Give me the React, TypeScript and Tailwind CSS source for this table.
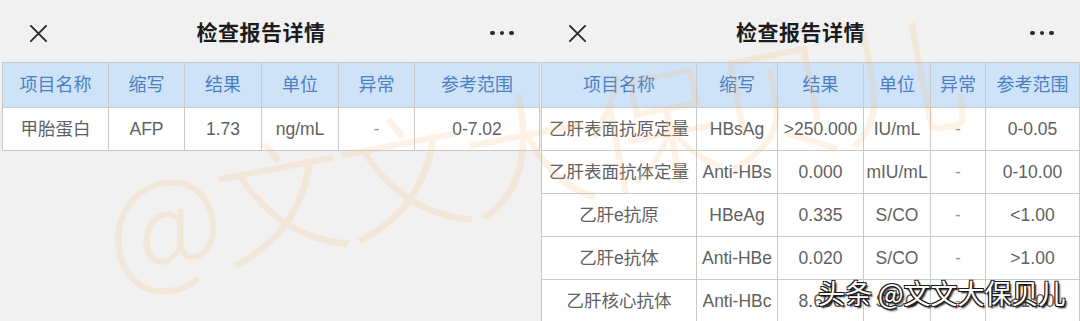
import React from "react";

const font = "font-['Liberation_Sans','Noto_Sans_CJK_SC',sans-serif]";

type Panel = {
  cols: string;
  headers: string[];
  rows: string[][];
};

const leftPanel: Panel = {
  cols: "grid-cols-[106px_76px_77px_77px_76px_1fr]",
  headers: ["项目名称", "缩写", "结果", "单位", "异常", "参考范围"],
  rows: [["甲胎蛋白", "AFP", "1.73", "ng/mL", "-", "0-7.02"]],
};

const rightPanel: Panel = {
  cols: "grid-cols-[155px_81px_86px_67px_55px_1fr]",
  headers: ["项目名称", "缩写", "结果", "单位", "异常", "参考范围"],
  rows: [
    ["乙肝表面抗原定量", "HBsAg", ">250.000", "IU/mL", "-", "0-0.05"],
    ["乙肝表面抗体定量", "Anti-HBs", "0.000", "mIU/mL", "-", "0-10.00"],
    ["乙肝e抗原", "HBeAg", "0.335", "S/CO", "-", "<1.00"],
    ["乙肝e抗体", "Anti-HBe", "0.020", "S/CO", "-", ">1.00"],
    ["乙肝核心抗体", "Anti-HBc", "8.606", "S/CO", "-", "<1.00"],
  ],
};

function NavBar() {
  return (
    <div className="flex h-[62px] items-center pt-[4px]">
      <div className="flex w-[72px] justify-center">
        <svg width="19" height="19" viewBox="0 0 20 20" fill="none">
          <path d="M2 2L18 18M18 2L2 18" stroke="#2a2a2a" strokeWidth="2" strokeLinecap="round" />
        </svg>
      </div>
      <div className="flex-1 text-center text-[21px] font-bold text-[#1c1c1c] tracking-[0.5px]">
        检查报告详情
      </div>
      <div className="flex w-[92px] items-center gap-[5px] pl-[42px]">
        <span className="h-[4.5px] w-[4.5px] rounded-full bg-[#2a2a2a]" />
        <span className="h-[4.5px] w-[4.5px] rounded-full bg-[#2a2a2a]" />
        <span className="h-[4.5px] w-[4.5px] rounded-full bg-[#2a2a2a]" />
      </div>
    </div>
  );
}

function ReportPanel({ panel, className }: { panel: Panel; className?: string }) {
  return (
    <div className={`w-[540px] shrink-0 ${className ?? ""}`}>
      <NavBar />
      <div className={`grid ${panel.cols} border-l border-t border-[#c9c9c9]`}>
        {panel.headers.map((h) => (
          <div
            key={h}
            className="flex h-[45px] items-center justify-center border-b border-r border-[#c9c9c9] bg-[#cfe3f8] text-[18px] text-[#4a80c2]"
          >
            {h}
          </div>
        ))}
        {panel.rows.map((row, ri) =>
          row.map((cell, ci) => (
            <div
              key={`${ri}-${ci}`}
              className={`flex h-[43px] items-center justify-center whitespace-nowrap border-b border-r border-[#c9c9c9] bg-white text-[17.5px] ${
                cell === "-" ? "text-[#9a9a9a]" : "text-[#616161]"
              }`}
            >
              {cell}
            </div>
          ))
        )}
      </div>
    </div>
  );
}

export default function App() {
  return (
    <div className={`relative h-[321px] w-[1080px] overflow-hidden bg-[#f1f1f1] ${font}`}>
      <div className="flex">
        <ReportPanel panel={leftPanel} className="pl-[2px]" />
        <ReportPanel panel={rightPanel} className="pl-[1px]" />
      </div>

      {/* faint watermark */}
      <div className="pointer-events-none absolute left-[104px] top-[162px] origin-left -rotate-[11deg] whitespace-nowrap font-['Noto_Sans_CJK_SC',sans-serif] text-[130px] font-light leading-none tracking-[-4px] text-[#f7b56b] opacity-[0.17]">
        @文文大保贝儿
      </div>

      {/* platform tag */}
      <div className="pointer-events-none absolute left-[818px] top-[279px] whitespace-nowrap font-['Noto_Sans_CJK_SC',sans-serif] text-[27px] leading-none text-white [text-shadow:1px_1px_0_#1a1a1a,-1px_-1px_0_#1a1a1a,1px_-1px_0_#1a1a1a,-1px_1px_0_#1a1a1a,2px_2px_2px_#000]">
        头条 @文文大保贝儿
      </div>
    </div>
  );
}
